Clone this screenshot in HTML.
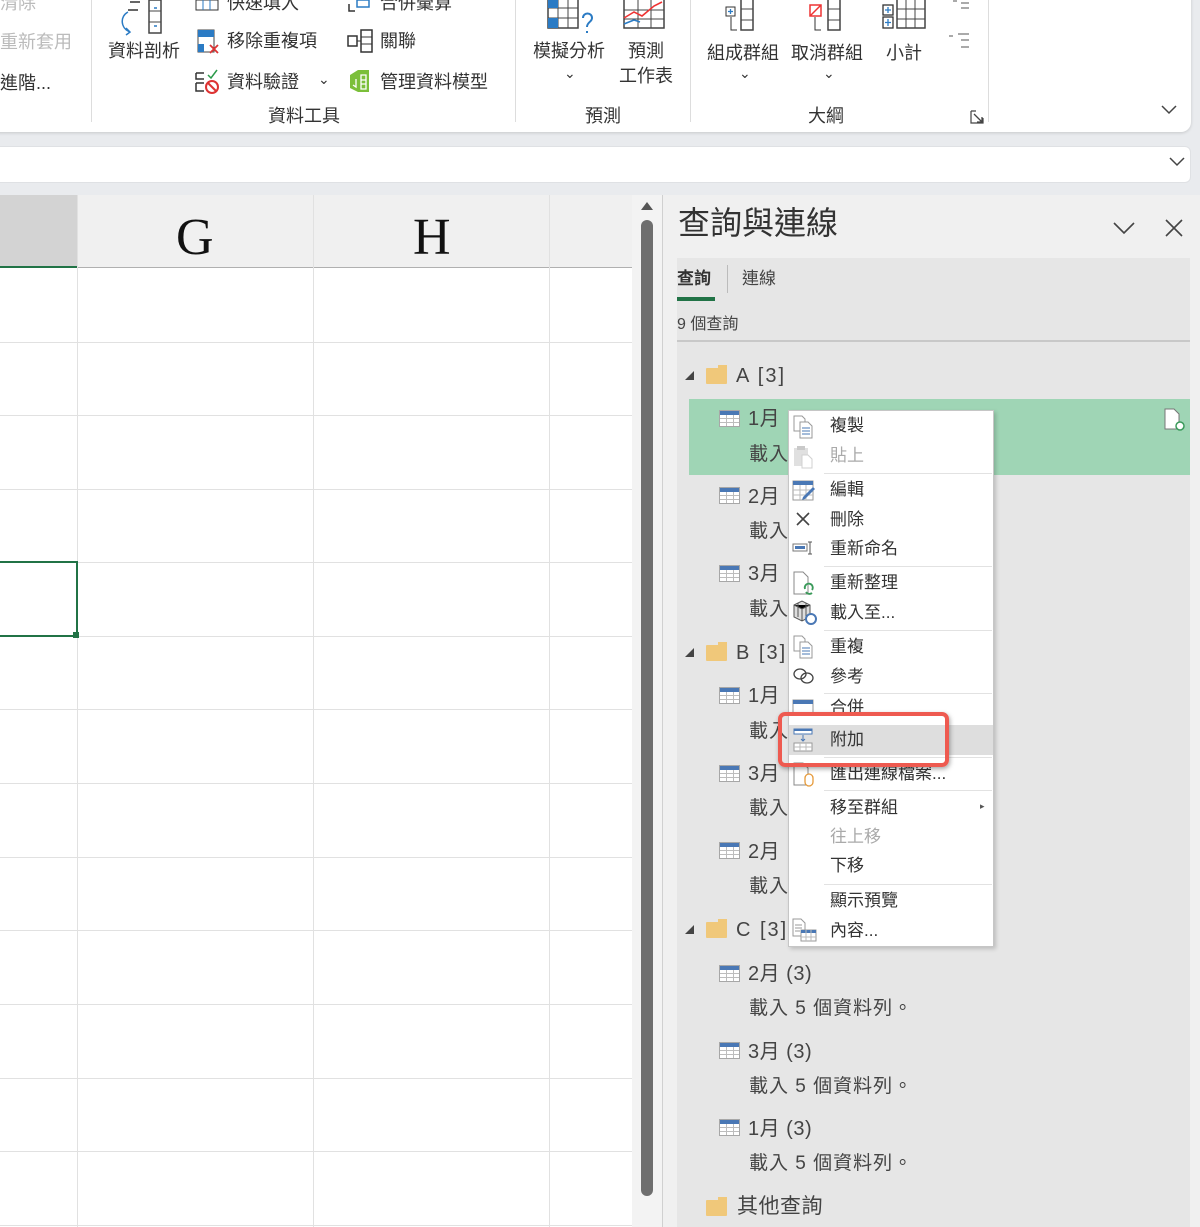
<!DOCTYPE html>
<html><head><meta charset="utf-8">
<style>
*{margin:0;padding:0;box-sizing:border-box}
body{width:1200px;height:1227px;position:relative;overflow:hidden;background:#e9ebee;font-family:"Liberation Sans","Noto Sans CJK TC",sans-serif;color:#333}
.a{position:absolute}
.t{position:absolute;white-space:nowrap;line-height:1}
.r{font-size:18px !important}
.vl{position:absolute;width:1px;background:#e1e1e1}
.hl{position:absolute;height:1px;background:#e1e1e1}
.mi{position:absolute;left:830px;font-size:17px;color:#333;white-space:nowrap;line-height:1}
.ms{position:absolute;left:824px;width:168px;height:1px;background:#e2e2e2}
.q{position:absolute;font-size:20px;color:#444;white-space:nowrap;line-height:1;letter-spacing:.5px}
.s{position:absolute;font-size:19px;color:#444;white-space:nowrap;line-height:1;letter-spacing:1px}
.ti{position:absolute;width:21px;height:17px;border:1px solid #a7a7a7;background:
linear-gradient(#4a78b5 0 4px,transparent 4px),
repeating-linear-gradient(90deg,transparent 0 6px,#bdbdbd 6px 7px),
repeating-linear-gradient(0deg,transparent 0 3px,#bdbdbd 3px 4px),#fff}
.fo{position:absolute;width:21px;height:16px;background:#f0c87a;border-radius:1px}
.fo:before{content:"";position:absolute;left:12px;top:-3px;width:9px;height:4px;background:#f0c87a}
.tri{position:absolute;width:0;height:0;border-left:9px solid transparent;border-bottom:9px solid #444}
</style></head><body>

<!-- ribbon -->
<div class="a" style="left:-20px;top:-20px;width:1211px;height:152px;background:#fff;border-radius:0 0 10px 0;box-shadow:0 1px 3px rgba(0,0,0,.15)"></div>
<div class="t r" style="left:0;top:-6px;color:#bbb">清除</div>
<div class="t r" style="left:0;top:33px;color:#bbb">重新套用</div>
<div class="t r" style="left:0;top:74px;color:#333">進階...</div>
<div class="a" style="left:91px;top:0;width:1px;height:122px;background:#ddd"></div>
<div class="a" style="left:515px;top:0;width:1px;height:122px;background:#ddd"></div>
<div class="a" style="left:690px;top:0;width:1px;height:122px;background:#ddd"></div>
<div class="a" style="left:988px;top:0;width:1px;height:122px;background:#ddd"></div>
<svg class="a" style="left:116px;top:0" width="54" height="36"><path d="M14 2h10M12 10h10" stroke="#333" stroke-width="1.5"/><rect x="33" y="0" width="12" height="33" fill="none" stroke="#444" stroke-width="1.5"/><path d="M33 11h12M33 22h12" stroke="#444"/><path d="M38 8h3M38 26h3" stroke="#2b7bc4" stroke-width="1.5"/><path d="M12 12c-8 4-8 16 2 20M10 28l4 4-4 3" fill="none" stroke="#2b7bc4" stroke-width="1.5"/></svg>
<div class="t r" style="left:108px;top:42px">資料剖析</div>
<svg class="a" style="left:195px;top:0" width="26" height="12"><rect x="1" y="0" width="22" height="10" fill="none" stroke="#333"/><path d="M8 0v10M15 0v10" stroke="#2b7bc4"/></svg>
<div class="t r" style="left:227px;top:-6px">快速填入</div>
<svg class="a" style="left:197px;top:29px" width="26" height="26"><rect x="1" y="1" width="16" height="22" fill="none" stroke="#444"/><rect x="1" y="1" width="16" height="7" fill="#2b7bc4"/><rect x="1" y="15" width="6" height="8" fill="#2b7bc4"/><path d="M13 16l8 8M21 16l-8 8" stroke="#d33" stroke-width="1.8"/></svg>
<div class="t r" style="left:227px;top:32px">移除重複項</div>
<svg class="a" style="left:195px;top:69px" width="26" height="26"><path d="M1 4h8M1 4v6h8M1 14h8M1 14v8h8" fill="none" stroke="#333" stroke-width="1.5"/><path d="M13 6l3 3 6-8" fill="none" stroke="#2a9a4a" stroke-width="1.5"/><circle cx="17" cy="18" r="6" fill="none" stroke="#d33" stroke-width="2"/><path d="M13 14l8 8" stroke="#d33" stroke-width="2"/></svg>
<div class="t r" style="left:227px;top:73px">資料驗證</div>
<div class="t" style="left:318px;top:72px;font-size:14px">⌄</div>
<svg class="a" style="left:347px;top:0" width="26" height="12"><rect x="10" y="0" width="12" height="7" fill="none" stroke="#2b7bc4" stroke-width="1.5"/><path d="M2 4v7h6" fill="none" stroke="#333" stroke-width="1.5"/></svg>
<div class="t r" style="left:380px;top:-6px">合併彙算</div>
<svg class="a" style="left:347px;top:29px" width="28" height="26"><rect x="1" y="7" width="9" height="10" fill="none" stroke="#333" stroke-width="1.5"/><rect x="14" y="1" width="11" height="22" fill="none" stroke="#333" stroke-width="1.5"/><path d="M14 8h11M14 15h11M10 12h4" stroke="#333"/></svg>
<div class="t r" style="left:380px;top:32px">關聯</div>
<svg class="a" style="left:347px;top:69px" width="26" height="26"><path d="M3 6l8-5h11v22H11L3 19z" fill="#7bbf3a"/><path d="M14 6h5v14h-5zM14 11h5M14 15h5" fill="none" stroke="#fff" stroke-width="1.3"/><path d="M9 10v8l-3-2" fill="none" stroke="#fff" stroke-width="1.3"/></svg>
<div class="t r" style="left:380px;top:73px">管理資料模型</div>
<div class="t r" style="left:268px;top:107px">資料工具</div>
<svg class="a" style="left:547px;top:0" width="48" height="36"><rect x="1" y="-2" width="30" height="30" fill="none" stroke="#444" stroke-width="1.5"/><path d="M1 8h30M1 18h30M11 -2v30M21 -2v30" stroke="#444"/><rect x="1" y="-2" width="10" height="10" fill="#2b7bc4"/><rect x="1" y="18" width="10" height="10" fill="#2b7bc4"/><path d="M36 18c0-6 9-6 9 0 0 4-5 4-5 9M40 31v2" fill="none" stroke="#2b7bc4" stroke-width="2"/></svg>
<div class="t r" style="left:533px;top:42px">模擬分析</div>
<div class="t" style="left:564px;top:66px;font-size:14px">⌄</div>
<svg class="a" style="left:622px;top:0" width="48" height="36"><rect x="2" y="-2" width="40" height="30" fill="none" stroke="#444" stroke-width="1.5"/><path d="M2 10h40M2 19h40M16 -2v30M29 -2v30" stroke="#444"/><path d="M2 18l10-6 8 4 12-10 8-4" fill="none" stroke="#e33" stroke-width="1.6"/><path d="M2 24l10-4 6 2" fill="none" stroke="#2b7bc4" stroke-width="1.6"/></svg>
<div class="t r" style="left:628px;top:42px">預測</div>
<div class="t r" style="left:619px;top:67px">工作表</div>
<div class="t r" style="left:585px;top:107px">預測</div>
<svg class="a" style="left:725px;top:0" width="40" height="32"><rect x="1" y="7" width="9" height="9" fill="none" stroke="#333"/><path d="M5.5 9v5M3 11.5h5" stroke="#2b7bc4" stroke-width="1.3"/><path d="M6 17v13h6" fill="none" stroke="#333"/><rect x="16" y="-2" width="12" height="32" fill="none" stroke="#444" stroke-width="1.5"/><path d="M16 9h12M16 20h12" stroke="#444"/></svg>
<div class="t r" style="left:707px;top:44px">組成群組</div>
<div class="t" style="left:739px;top:66px;font-size:14px">⌄</div>
<svg class="a" style="left:807px;top:0" width="40" height="32"><rect x="3" y="5" width="11" height="11" fill="none" stroke="#e33" stroke-width="1.5"/><path d="M3 16l11-11" stroke="#e33" stroke-width="1.5"/><path d="M8 17v13h6" fill="none" stroke="#333"/><rect x="21" y="-2" width="12" height="32" fill="none" stroke="#444" stroke-width="1.5"/><path d="M21 9h12M21 20h12" stroke="#444"/></svg>
<div class="t r" style="left:791px;top:44px">取消群組</div>
<div class="t" style="left:823px;top:66px;font-size:14px">⌄</div>
<svg class="a" style="left:882px;top:0" width="46" height="32"><rect x="1" y="5" width="10" height="10" fill="none" stroke="#333" stroke-width="1.3"/><rect x="1" y="17" width="10" height="11" fill="none" stroke="#333" stroke-width="1.3"/><path d="M6 7v6M3 10h6M6 19v7M3 22.5h6" stroke="#2b7bc4" stroke-width="1.3"/><rect x="15" y="-2" width="28" height="30" fill="none" stroke="#444" stroke-width="1.5"/><path d="M15 9h28M15 19h28M24 -2v30M33 -2v30" stroke="#444"/></svg>
<div class="t r" style="left:886px;top:44px">小計</div>
<svg class="a" style="left:948px;top:0" width="24" height="52"><path d="M5 1h4M13 3h8M13 8h8M1 36h4M10 34h11M13 40h8M13 47h8" stroke="#777" stroke-width="1.2"/></svg>
<div class="t r" style="left:808px;top:107px">大綱</div>
<svg class="a" style="left:970px;top:110px" width="14" height="14"><path d="M1 1h5M1 1v12h12V8" fill="none" stroke="#444" stroke-width="1.2"/><path d="M4 4l8 8M7 12h5V7" fill="none" stroke="#444" stroke-width="1.3"/></svg>
<svg class="a" style="left:1160px;top:104px" width="18" height="12"><path d="M2 2l7 7 7-7" fill="none" stroke="#444" stroke-width="1.5"/></svg>

<div class="a" style="left:-10px;top:146px;width:1201px;height:37px;background:#fff;border-radius:6px;border:1px solid #dfe1e4"></div>
<svg class="a" style="left:1168px;top:156px" width="18" height="12"><path d="M2 2l7 7 7-7" fill="none" stroke="#444" stroke-width="1.5"/></svg>

<div class="a" style="left:0;top:195px;width:632px;height:1032px;background:#fff"></div>
<div class="a" style="left:0;top:195px;width:632px;height:73px;background:#f0f0f0;border-bottom:1px solid #b0b0b0"></div>
<div class="a" style="left:0;top:195px;width:77px;height:73px;background:#d3d3d3;border-bottom:2px solid #217346"></div>
<div class="t" style="left:176px;top:212px;font-size:52px;font-family:'Liberation Serif',serif;color:#111">G</div>
<div class="t" style="left:413px;top:212px;font-size:52px;font-family:'Liberation Serif',serif;color:#111">H</div>
<div class="vl" style="left:77px;top:195px;height:1032px"></div>
<div class="vl" style="left:313px;top:195px;height:1032px"></div>
<div class="vl" style="left:549px;top:195px;height:1032px"></div>
<div class="hl" style="left:0;top:342px;width:632px"></div>
<div class="hl" style="left:0;top:415px;width:632px"></div>
<div class="hl" style="left:0;top:489px;width:632px"></div>
<div class="hl" style="left:0;top:562px;width:632px"></div>
<div class="hl" style="left:0;top:636px;width:632px"></div>
<div class="hl" style="left:0;top:709px;width:632px"></div>
<div class="hl" style="left:0;top:783px;width:632px"></div>
<div class="hl" style="left:0;top:857px;width:632px"></div>
<div class="hl" style="left:0;top:930px;width:632px"></div>
<div class="hl" style="left:0;top:1004px;width:632px"></div>
<div class="hl" style="left:0;top:1078px;width:632px"></div>
<div class="hl" style="left:0;top:1151px;width:632px"></div>
<div class="hl" style="left:0;top:1225px;width:632px"></div>
<div class="a" style="left:-3px;top:561px;width:81px;height:76px;border:2px solid #217346"></div>
<div class="a" style="left:73px;top:632px;width:6px;height:6px;background:#217346"></div>

<div class="a" style="left:632px;top:195px;width:30px;height:1032px;background:#f3f3f3"></div>
<div class="a" style="left:662px;top:195px;width:1px;height:1032px;background:#d0d0d0"></div>
<div class="a" style="left:641px;top:202px;border-left:6px solid transparent;border-right:6px solid transparent;border-bottom:8px solid #555"></div>
<div class="a" style="left:641px;top:220px;width:12px;height:976px;background:#6e6e6e;border-radius:6px"></div>

<div class="a" style="left:663px;top:195px;width:537px;height:1032px;background:#f0f0f0"></div>
<div class="t" style="left:678px;top:207px;font-size:32px;color:#333">查詢與連線</div>
<svg class="a" style="left:1112px;top:220px" width="24" height="16"><path d="M2 3l10 10 10-10" fill="none" stroke="#444" stroke-width="1.6"/></svg>
<svg class="a" style="left:1164px;top:218px" width="20" height="20"><path d="M2 2l16 16M18 2L2 18" stroke="#444" stroke-width="1.6"/></svg>
<div class="a" style="left:677px;top:258px;width:513px;height:969px;background:#e6e6e6"></div>
<div class="t" style="left:677px;top:270px;font-size:17px;font-weight:bold;color:#333">查詢</div>
<div class="a" style="left:727px;top:265px;width:1px;height:28px;background:#bbb"></div>
<div class="t" style="left:742px;top:270px;font-size:17px;color:#444">連線</div>
<div class="a" style="left:677px;top:297px;width:38px;height:4px;background:#217346"></div>
<div class="t" style="left:677px;top:317px;font-size:16px;color:#444">9 個查詢</div>
<div class="a" style="left:677px;top:340px;width:513px;height:2px;background:#c8c8c8"></div>

<div class="tri" style="left:685px;top:371px"></div><div class="fo" style="left:706px;top:368px"></div><div class="q" style="left:736px;top:366px;letter-spacing:2px">A [3]</div>
<div class="a" style="left:689px;top:399px;width:501px;height:76px;background:#9fd5b5"></div>
<svg class="a" style="left:1164px;top:408px" width="22" height="24"><path d="M1 1h9l5 5v15H1z" fill="#fff" stroke="#777"/><circle cx="16" cy="18" r="4" fill="#fff" stroke="#3a9a5a" stroke-width="1.5"/></svg>
<div class="ti" style="left:719px;top:410px"></div><div class="q" style="left:748px;top:409px">1月</div><div class="s" style="left:749px;top:445px">載入</div>
<div class="ti" style="left:719px;top:487px"></div><div class="q" style="left:748px;top:487px">2月</div><div class="s" style="left:749px;top:522px">載入</div>
<div class="ti" style="left:719px;top:565px"></div><div class="q" style="left:748px;top:564px">3月</div><div class="s" style="left:749px;top:600px">載入</div>
<div class="tri" style="left:685px;top:648px"></div><div class="fo" style="left:706px;top:645px"></div><div class="q" style="left:736px;top:643px;letter-spacing:2px">B [3]</div>
<div class="ti" style="left:719px;top:687px"></div><div class="q" style="left:748px;top:686px">1月</div><div class="s" style="left:749px;top:722px">載入</div>
<div class="ti" style="left:719px;top:765px"></div><div class="q" style="left:748px;top:764px">3月</div><div class="s" style="left:749px;top:799px">載入</div>
<div class="ti" style="left:719px;top:842px"></div><div class="q" style="left:748px;top:842px">2月</div><div class="s" style="left:749px;top:877px">載入</div>
<div class="tri" style="left:685px;top:925px"></div><div class="fo" style="left:706px;top:922px"></div><div class="q" style="left:736px;top:920px;letter-spacing:2px">C [3]</div>
<div class="ti" style="left:719px;top:965px"></div><div class="q" style="left:748px;top:964px">2月 (3)</div><div class="s" style="left:749px;top:999px">載入 5 個資料列。</div>
<div class="ti" style="left:719px;top:1042px"></div><div class="q" style="left:748px;top:1042px">3月 (3)</div><div class="s" style="left:749px;top:1077px">載入 5 個資料列。</div>
<div class="ti" style="left:719px;top:1119px"></div><div class="q" style="left:748px;top:1119px">1月 (3)</div><div class="s" style="left:749px;top:1154px">載入 5 個資料列。</div>
<div class="fo" style="left:706px;top:1200px"></div><div class="q" style="left:737px;top:1196px;font-size:21px">其他查詢</div>

<div class="a" style="left:788px;top:410px;width:206px;height:537px;background:#fff;border:1px solid #c6c6c6;box-shadow:2px 2px 4px rgba(0,0,0,.18)"></div>
<div class="a" style="left:789px;top:725px;width:204px;height:30px;background:#dedede"></div>
<div class="ms" style="top:473px"></div><div class="ms" style="top:566px"></div><div class="ms" style="top:630px"></div><div class="ms" style="top:693px"></div><div class="ms" style="top:757px"></div><div class="ms" style="top:790px"></div><div class="ms" style="top:884px"></div>
<div class="mi" style="top:417px">複製</div>
<div class="mi" style="top:447px;color:#aaa">貼上</div>
<div class="mi" style="top:481px">編輯</div>
<div class="mi" style="top:511px">刪除</div>
<div class="mi" style="top:540px">重新命名</div>
<div class="mi" style="top:574px">重新整理</div>
<div class="mi" style="top:604px">載入至...</div>
<div class="mi" style="top:638px">重複</div>
<div class="mi" style="top:668px">參考</div>
<div class="mi" style="top:699px">合併</div>
<div class="mi" style="top:731px">附加</div>
<div class="mi" style="top:765px">匯出連線檔案...</div>
<div class="mi" style="top:799px">移至群組</div>
<div class="t" style="left:980px;top:802px;font-size:9px;color:#555">▸</div>
<div class="mi" style="top:828px;color:#aaa">往上移</div>
<div class="mi" style="top:857px">下移</div>
<div class="mi" style="top:892px">顯示預覽</div>
<div class="mi" style="top:922px">內容...</div>
<svg class="a" style="left:793px;top:415px" width="22" height="24"><path d="M1 1h8l3 3v12H1z" fill="#fff" stroke="#999"/><path d="M7 7h8l4 4v12H7z" fill="#fff" stroke="#999"/><path d="M9 13h8M9 16h8M9 19h8" stroke="#4a78b5"/></svg>
<svg class="a" style="left:793px;top:445px" width="22" height="24" opacity=".45"><rect x="1" y="3" width="14" height="18" fill="#bbb"/><rect x="4" y="1" width="8" height="4" fill="#888"/><path d="M9 10h6l4 4v9H9z" fill="#fff" stroke="#999"/></svg>
<svg class="a" style="left:792px;top:479px" width="24" height="24"><rect x="1" y="2" width="20" height="19" fill="#fff" stroke="#999"/><rect x="1" y="2" width="20" height="4" fill="#4a78b5"/><path d="M1 11h20M1 16h20M8 6v15M14 6v15" stroke="#bbb"/><path d="M10 21l3-1 10-10-2-2-10 10z" fill="#4a78b5"/></svg>
<svg class="a" style="left:795px;top:511px" width="16" height="16"><path d="M2 2l12 12M14 2L2 14" stroke="#444" stroke-width="1.6"/></svg>
<svg class="a" style="left:792px;top:540px" width="24" height="16"><rect x="1" y="4" width="14" height="7" fill="#fff" stroke="#777"/><rect x="3" y="6" width="10" height="3" fill="#4a78b5"/><path d="M18 2v12M16 2h4M16 14h4" stroke="#555"/></svg>
<svg class="a" style="left:793px;top:571px" width="24" height="26"><path d="M1 1h9l5 5v17H1z" fill="#fff" stroke="#888"/><path d="M12 18a4 4 0 1 1 7 1M19 22a4 4 0 0 1-6-1" fill="none" stroke="#3a9a5a" stroke-width="1.8"/></svg>
<svg class="a" style="left:792px;top:600px" width="26" height="26"><path d="M2 5l8-4 8 4v12l-8 4-8-4z" fill="#ddd" stroke="#555"/><path d="M2 5l8 4 8-4M10 9v12M6 3v14M14 3v14" stroke="#555"/><circle cx="19" cy="19" r="5" fill="#fff" stroke="#4a78b5" stroke-width="2"/></svg>
<svg class="a" style="left:793px;top:635px" width="22" height="24"><path d="M1 1h8l3 3v12H1z" fill="#fff" stroke="#999"/><path d="M7 7h8l4 4v12H7z" fill="#fff" stroke="#999"/><path d="M9 13h8M9 16h8M9 19h8" stroke="#4a78b5"/></svg>
<svg class="a" style="left:792px;top:666px" width="24" height="20"><ellipse cx="8" cy="8" rx="6" ry="5" fill="none" stroke="#444" stroke-width="1.3"/><ellipse cx="15" cy="12" rx="6" ry="5" fill="none" stroke="#444" stroke-width="1.3"/></svg>
<svg class="a" style="left:792px;top:698px" width="24" height="16"><rect x="1" y="2" width="20" height="14" fill="#fff" stroke="#999"/><rect x="1" y="2" width="20" height="4" fill="#4a78b5"/></svg>
<svg class="a" style="left:793px;top:728px" width="22" height="24"><rect x="1" y="1" width="18" height="5" fill="#fff" stroke="#4a78b5"/><rect x="1" y="1" width="18" height="2" fill="#4a78b5"/><path d="M10 7v6M8 11l2 2 2-2" fill="none" stroke="#4a78b5"/><rect x="1" y="15" width="18" height="8" fill="#fff" stroke="#999"/><path d="M1 19h18M7 15v8M13 15v8" stroke="#bbb"/></svg>
<svg class="a" style="left:793px;top:762px" width="24" height="26"><path d="M1 1h9l5 5v17H1z" fill="#fff" stroke="#888"/><rect x="12" y="12" width="8" height="12" rx="4" fill="#fff" stroke="#e69a3a" stroke-width="1.3"/></svg>
<svg class="a" style="left:792px;top:918px" width="26" height="26"><path d="M1 1h8l4 4v13H1z" fill="#fff" stroke="#999"/><path d="M3 7h7M3 10h7M3 13h5" stroke="#999"/><rect x="9" y="12" width="15" height="11" fill="#fff" stroke="#999"/><rect x="9" y="12" width="15" height="3" fill="#4a78b5"/><path d="M9 19h15M14 12v11M19 12v11" stroke="#bbb"/></svg>
<div class="a" style="left:778px;top:712px;width:171px;height:55px;border:4px solid #ee5a50;border-radius:7px;box-shadow:1px 2px 5px rgba(0,0,0,.35)"></div>
</body></html>
